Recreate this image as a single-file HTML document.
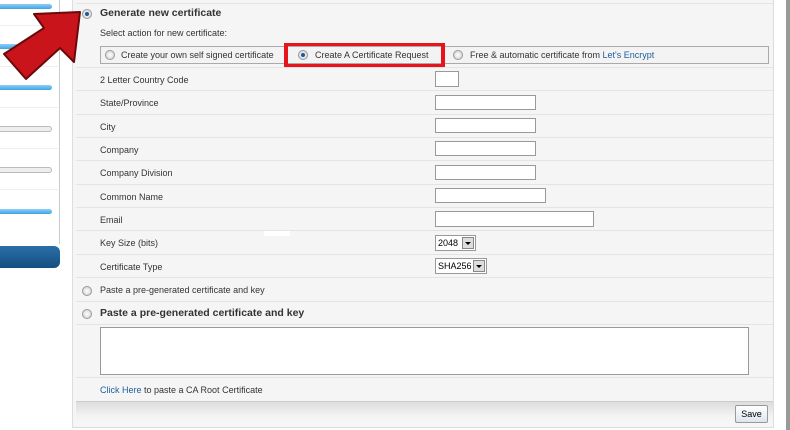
<!DOCTYPE html>
<html><head><style>
*{margin:0;padding:0;box-sizing:border-box}
body{width:790px;height:430px;background:#fff;font-family:"Liberation Sans",sans-serif;font-size:9px;color:#333;position:relative;overflow:hidden}
.a{position:absolute}
.bar{position:absolute;left:0;width:52px;height:5px;border-radius:0 3px 3px 0}
.blue{background:linear-gradient(#8fd0f7,#3ea3e3)}
.grey{background:#eee;border:1px solid #bbb;border-left:none;height:6px}
.sep{position:absolute;left:0;width:58px;height:1px;background:#eee}
.row{position:absolute;left:76px;width:697px;height:1px;background:#e4e4e4}
.lbl{position:absolute;left:100px}
.in{position:absolute;left:435px;height:15px;background:#fff;border:1px solid #999}
.rad{position:absolute;width:10px;height:10px;border-radius:50%;border:1px solid #999;background:radial-gradient(#fff,#ccc)}
.rad.on::after{content:"";position:absolute;left:2px;top:2px;width:4px;height:4px;border-radius:50%;background:#1a5a9a}
.sel{position:absolute;left:435px;height:16px;background:#fff;border:1px solid #999;padding:2px 0 0 2px;font-size:9px;color:#000}
.sel i{position:absolute;right:1px;top:1px;width:12px;height:12px;background:#ddd;border:1px solid #888}
.sel i::after{content:"";position:absolute;left:2px;top:4px;border:3px solid transparent;border-top:3px solid #000}
a{color:#1b5e9e;text-decoration:none}
</style></head><body>
<div class="a" style="left:59px;top:0;width:1px;height:244px;background:#ccc"></div>
<div class="bar blue" style="top:4px"></div>
<div class="sep" style="top:25px"></div>
<div class="bar blue" style="top:44px"></div>
<div class="sep" style="top:66px"></div>
<div class="bar blue" style="top:85px"></div>
<div class="sep" style="top:107px"></div>
<div class="bar grey" style="top:126px"></div>
<div class="sep" style="top:148px"></div>
<div class="bar grey" style="top:167px"></div>
<div class="sep" style="top:189px"></div>
<div class="bar blue" style="top:209px"></div>
<div class="a" style="left:0;top:246px;width:60px;height:22px;background:linear-gradient(#2a6fa8,#154f80);border-radius:0 6px 6px 0"></div>
<div class="a" style="left:72px;top:0;width:702px;height:428px;background:#f5f5f5;border:1px solid #ddd;border-top:none"></div>
<div class="a" style="left:786px;top:0;width:4px;height:430px;background:#999"></div>
<div class="row" style="top:3px"></div>
<div class="rad on" style="left:82px;top:9px"></div>
<div class="lbl" style="top:7px;font-weight:bold;font-size:10.5px">Generate new certificate</div>
<div class="lbl" style="top:28px">Select action for new certificate:</div>
<div class="a" style="left:100px;top:46px;width:669px;height:18px;border:1px solid #aaa;background:#f3f3f3"></div>
<div class="rad" style="left:105px;top:50px"></div>
<div class="a" style="left:121px;top:50px">Create your own self signed certificate</div>
<div class="a" style="left:284px;top:43px;width:161px;height:24px;border:3px solid #e8141c;border-left-width:4px;border-right-width:4px"></div>
<div class="rad on" style="left:298px;top:50px"></div>
<div class="a" style="left:315px;top:50px">Create A Certificate Request</div>
<div class="rad" style="left:453px;top:50px"></div>
<div class="a" style="left:470px;top:50px">Free &amp; automatic certificate from <a>Let's Encrypt</a></div>
<div class="row" style="top:67px"></div>
<div class="lbl" style="top:75px">2 Letter Country Code</div><div class="in" style="top:71px;width:24px;height:16px"></div>
<div class="row" style="top:90px"></div>
<div class="lbl" style="top:98px">State/Province</div><div class="in" style="top:95px;width:101px"></div>
<div class="row" style="top:114px"></div>
<div class="lbl" style="top:122px">City</div><div class="in" style="top:118px;width:101px"></div>
<div class="row" style="top:137px"></div>
<div class="lbl" style="top:145px">Company</div><div class="in" style="top:141px;width:101px"></div>
<div class="row" style="top:160px"></div>
<div class="lbl" style="top:168px">Company Division</div><div class="in" style="top:165px;width:101px"></div>
<div class="row" style="top:184px"></div>
<div class="lbl" style="top:192px">Common Name</div><div class="in" style="top:188px;width:111px"></div>
<div class="row" style="top:207px"></div>
<div class="lbl" style="top:215px">Email</div><div class="in" style="top:211px;width:159px;height:16px"></div>
<div class="row" style="top:230px"></div>
<div class="a" style="left:264px;top:231px;width:26px;height:5px;background:#fff"></div>
<div class="lbl" style="top:238px">Key Size (bits)</div><div class="sel" style="top:235px;width:41px">2048<i></i></div>
<div class="row" style="top:254px"></div>
<div class="lbl" style="top:262px">Certificate Type</div><div class="sel" style="top:258px;width:52px">SHA256<i></i></div>
<div class="row" style="top:277px"></div>
<div class="rad" style="left:82px;top:286px"></div>
<div class="lbl" style="top:285px">Paste a pre-generated certificate and key</div>
<div class="row" style="top:301px"></div>
<div class="rad" style="left:82px;top:309px"></div>
<div class="lbl" style="top:307px;font-weight:bold;font-size:10.5px">Paste a pre-generated certificate and key</div>
<div class="row" style="top:324px"></div>
<div class="a" style="left:100px;top:327px;width:649px;height:48px;background:#fff;border:1px solid #999"></div>
<div class="row" style="top:377px"></div>
<div class="lbl" style="top:385px"><a>Click Here</a> to paste a CA Root Certificate</div>
<div class="a" style="left:76px;top:401px;width:697px;height:25px;background:linear-gradient(#ddd,#f3f3f3 60%,#f7f7f7);border-top:1px solid #ccc"></div>
<div class="a" style="left:735px;top:405px;width:33px;height:18px;border:1px solid #999;border-radius:2px;background:linear-gradient(#fff,#dde6ee);font-size:9px;color:#000;text-align:center;line-height:16px">Save</div>
<svg class="a" style="left:0;top:0" width="100" height="100"><polygon points="80,12 34,14 44,28 4,54 26,79 60,48 74,62" fill="#c8141a" stroke="#6a0a0a" stroke-width="2" stroke-linejoin="round"/></svg>
</body></html>
